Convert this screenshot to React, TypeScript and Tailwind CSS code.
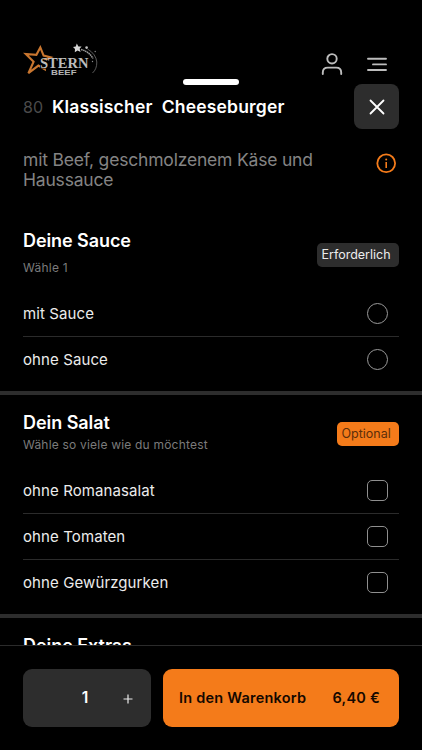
import { useState } from "react";

type Option = { id: string; label: string };

function Logo() {
  return (
    <svg width="76" height="34" viewBox="0 0 76 34" aria-label="Stern Beef">
      <path
        d="M17.3 4.4 L20.6 12.6 L27.6 14.3 L20.8 17.6 L21.8 26.2 L15.4 22.6 L5.4 30.2 L10.6 18.8 L2.8 11 L13.4 11.8 Z"
        fill="none"
        stroke="#c9762f"
        strokeWidth="2.1"
      />
      <path d="M17 17 H26 V25.5 H17 Z" fill="#000" />
      <text
        x="17"
        y="24.8"
        fill="#bcbcbc"
        fontFamily="Liberation Serif, serif"
        fontWeight="700"
        fontSize="14"
        textLength="48.5"
        lengthAdjust="spacingAndGlyphs"
      >
        STERN
      </text>
      <text
        x="28"
        y="32"
        fill="#b5b5b5"
        fontFamily="Liberation Sans, sans-serif"
        fontWeight="700"
        fontSize="6.4"
        textLength="25.5"
        lengthAdjust="spacingAndGlyphs"
      >
        BEEF
      </text>
      <path
        d="M53.8 0.6 L55.4 3.4 L58.6 3.4 L56.6 5.8 L57.6 9 L54.6 7.6 L51.8 9.2 L52 6 L50 4 L52.8 3.4 Z"
        fill="#d6d6d6"
      />
      <path
        d="M58 6.5 Q66 8.5 70 15.5"
        fill="none"
        stroke="#9a9a9a"
        strokeWidth="1.5"
        strokeDasharray="1.6 0.5"
      />
      <path
        d="M64.5 6 Q73 11 73.8 19 Q74 26 69.5 30"
        fill="none"
        stroke="#707070"
        strokeWidth="0.8"
      />
      <circle cx="63.6" cy="4.6" r="1.3" fill="#c0c0c0" />
      <circle cx="72.2" cy="8.5" r="0.7" fill="#8b8b8b" />
      <circle cx="69.5" cy="18.5" r="0.7" fill="#8b8b8b" />
    </svg>
  );
}

function Badge({ required }: { required?: boolean }) {
  return required ? (
    <span className="h-6 w-[82px] rounded-[5px] bg-[#2d2d2d] pl-[4.5px] text-[12.5px] leading-6 text-[#ececec]">
      Erforderlich
    </span>
  ) : (
    <span className="h-6 w-[62px] rounded-[5px] bg-[#f47b1a] pl-[4.5px] text-[12.5px] leading-6 text-[#5c2e0a]">
      Optional
    </span>
  );
}

function OptionRow({ option, round }: { option: Option; round?: boolean }) {
  return (
    <label className="flex h-[46px] items-center justify-between border-b border-[#2b2b2b] pr-[11px] last:border-transparent">
      <span className="pt-[2px] text-[15px] tracking-[0.1px] text-[#ececec]">
        {option.label}
      </span>
      <input
        type={round ? "radio" : "checkbox"}
        name={round ? "sauce" : option.id}
        className={
          round
            ? "size-[21px] appearance-none rounded-full border border-[#9a9a9a]"
            : "size-[21px] appearance-none rounded-[5px] border border-[#8f8f8f]"
        }
      />
    </label>
  );
}

const sauces: Option[] = [
  { id: "mit-sauce", label: "mit Sauce" },
  { id: "ohne-sauce", label: "ohne Sauce" },
];

const salads: Option[] = [
  { id: "romana", label: "ohne Romanasalat" },
  { id: "tomaten", label: "ohne Tomaten" },
  { id: "gurken", label: "ohne Gewürzgurken" },
];

export default function App() {
  const [quantity, setQuantity] = useState(1);

  return (
    <div className="flex h-[750px] w-[422px] flex-col overflow-hidden bg-black font-['Inter',sans-serif] text-white">
      <header className="flex h-[79px] shrink-0 items-start justify-between pr-[35px] pl-[23px]">
        <div className="pt-[43px]">
          <Logo />
        </div>
        <div className="flex gap-6 pt-[53px]">
          <svg width="22" height="23" viewBox="0 0 22 23" fill="none" stroke="#bdbdbd" strokeWidth="1.9" strokeLinecap="round">
            <circle cx="11" cy="5.8" r="4.7" />
            <path d="M1.8 21 V19.5 Q1.8 14.6 6.8 14.6 H15.2 Q20.2 14.6 20.2 19.5 V21" />
          </svg>
          <svg width="20" height="23" viewBox="0 0 20 23" fill="none" stroke="#bdbdbd" strokeWidth="1.9" strokeLinecap="round">
            <path d="M1 5.7 H19 M6 11.4 H19 M1 17 H19" />
          </svg>
        </div>
      </header>

      <main className="min-h-0 flex-1 overflow-hidden">
        <div className="ml-[183px] h-[6px] w-[56px] rounded-full bg-white" />
        <div className="-mt-px flex items-start justify-between pr-[23px] pl-[23px]">
          <h1 className="flex pt-[11px] text-[17.5px] leading-6 font-semibold">
            <span className="w-[29px] text-[16px] font-normal text-[#4b4b4b]">80</span>
            <span className="tracking-[0.18px] whitespace-pre">Klassischer  Cheeseburger</span>
          </h1>
          <button className="flex size-[45px] items-center justify-center rounded-[8px] bg-[#2d2d2d]">
            <svg width="16" height="16" viewBox="0 0 16 16" stroke="#fff" strokeWidth="1.8" strokeLinecap="round">
              <path d="M1.5 1.5 L14.5 14.5 M14.5 1.5 L1.5 14.5" />
            </svg>
          </button>
        </div>

        <div className="mt-[20px] flex h-[82px] items-start justify-between pr-[25px] pl-[23px]">
          <p className="w-[310px] pt-px text-[17.5px] leading-[20px] tracking-[-0.19px] text-[#848484]">
            mit Beef, geschmolzenem Käse und
            <br />
            Haussauce
          </p>
          <svg width="21" height="21" viewBox="0 0 21 21" className="mt-[4px]" fill="none" stroke="#f47b1a">
            <circle cx="10.2" cy="10.3" r="8.9" strokeWidth="1.8" />
            <path d="M10.2 9 V15" strokeWidth="1.6" />
            <circle cx="10.2" cy="6.4" r="1" fill="#f47b1a" stroke="none" />
          </svg>
        </div>

        <section className="border-b-4 border-[#2d2d2d] px-[23px] pb-2">
          <div className="flex h-[60px] justify-between">
            <div>
              <h2 className="text-[18px] leading-[20px] font-semibold tracking-[-0.08px]">Deine Sauce</h2>
              <p className="mt-[9px] text-[12px] leading-4 tracking-[0.25px] text-[#7b7b7b]">Wähle 1</p>
            </div>
            <div className="flex pt-[12px]">
              <Badge required />
            </div>
          </div>
          <div>
            {sauces.map((o) => (
              <OptionRow key={o.id} option={o} round />
            ))}
          </div>
        </section>

        <section className="border-b-4 border-[#2d2d2d] px-[23px] pb-2">
          <div className="flex h-[73px] justify-between">
            <div className="pt-[18px]">
              <h2 className="text-[18px] leading-[20px] font-semibold tracking-[-0.05px]">Dein Salat</h2>
              <p className="mt-[4px] text-[12px] leading-4 tracking-[0.2px] text-[#7b7b7b]">
                Wähle so viele wie du möchtest
              </p>
            </div>
            <div className="flex pt-[27px]">
              <Badge />
            </div>
          </div>
          <div>
            {salads.map((o) => (
              <OptionRow key={o.id} option={o} />
            ))}
          </div>
        </section>

        <section className="px-[23px] pt-[18px]">
          <h2 className="text-[18px] leading-[20px] font-semibold tracking-[-0.05px]">Deine Extras</h2>
        </section>
      </main>

      <footer className="flex h-[105px] shrink-0 gap-3 border-t border-[#2b2b2b] px-[23px] pt-[23px]">
        <div className="flex h-[58px] w-[128px] items-center rounded-[9px] bg-[#2d2d2d]">
          <span className="ml-[57px] w-[10px] text-center text-[15.5px] font-semibold">{quantity}</span>
          <button className="ml-[33px] pt-px" onClick={() => setQuantity(quantity + 1)}>
            <svg width="10" height="10" viewBox="0 0 10 10" stroke="#ececec" strokeWidth="1.2">
              <path d="M5 0.5 V9.5 M0.5 5 H9.5" />
            </svg>
          </button>
        </div>
        <button className="flex h-[58px] flex-1 items-center justify-between rounded-[9px] bg-[#f47b1a] pr-[19px] pl-4 text-[14.5px] font-semibold tracking-[0.22px] text-[#140800]">
          <span>In den Warenkorb</span>
          <span>6,40 €</span>
        </button>
      </footer>
    </div>
  );
}
